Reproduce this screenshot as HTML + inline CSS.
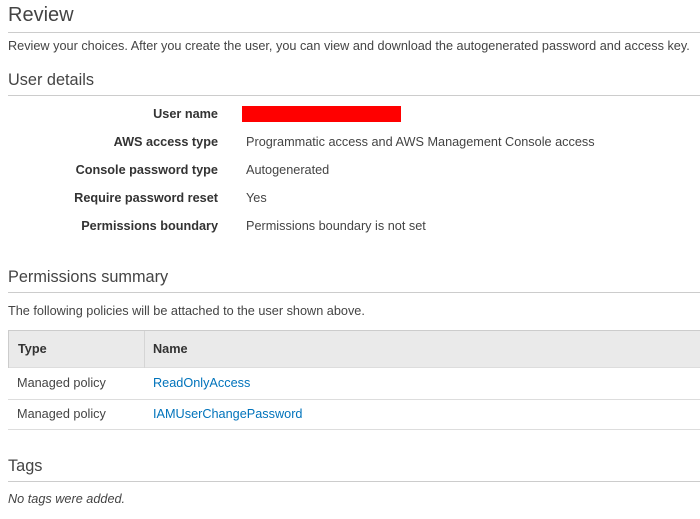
<!DOCTYPE html>
<html><head><style>
body{margin:0;width:700px;height:519px;background:#fff;font-family:"Liberation Sans",Arial,sans-serif;color:#444;position:relative;overflow:hidden}
.a{position:absolute;white-space:nowrap}
.h1{font-size:20px;color:#444}
.h2{font-size:16.3px;color:#444}
.hr{position:absolute;left:8px;right:0;height:1px;background:#ccc}
.t{font-size:12.7px;color:#444}
.lb{font-size:12.7px;font-weight:bold;color:#333;right:482px;text-align:right}
.v{font-size:12.7px;left:246px;color:#444}
.ln{color:#0073bb}
</style></head><body>
<div class="a h1" style="left:8px;top:4px">Review</div>
<div class="hr" style="top:32px"></div>
<div class="a t" style="left:8px;top:39px">Review your choices. After you create the user, you can view and download the autogenerated password and access key.</div>
<div class="a h2" style="left:8px;top:71px">User details</div>
<div class="hr" style="top:95px"></div>
<div class="a lb" style="top:107px">User name</div>
<div class="a" style="left:242px;top:106px;width:159px;height:16px;background:#f00"></div>
<div class="a lb" style="top:135px">AWS access type</div>
<div class="a v" style="top:135px">Programmatic access and AWS Management Console access</div>
<div class="a lb" style="top:163px">Console password type</div>
<div class="a v" style="top:163px">Autogenerated</div>
<div class="a lb" style="top:191px">Require password reset</div>
<div class="a v" style="top:191px">Yes</div>
<div class="a lb" style="top:219px">Permissions boundary</div>
<div class="a v" style="top:219px">Permissions boundary is not set</div>
<div class="a h2" style="left:8px;top:268px">Permissions summary</div>
<div class="hr" style="top:292px"></div>
<div class="a t" style="left:8px;top:304px">The following policies will be attached to the user shown above.</div>
<div class="a" style="left:8px;top:330px;width:692px;height:38px;background:#eaeaea;border-top:1px solid #ccc;box-sizing:border-box;border-bottom:1px solid #ddd"></div>
<div class="a" style="left:144px;top:331px;width:1px;height:37px;background:#d5d5d5"></div>
<div class="a" style="left:8px;top:330px;width:1px;height:38px;background:#ccc"></div>
<div class="a t" style="left:18px;top:342px;font-weight:bold;color:#333">Type</div>
<div class="a t" style="left:153px;top:342px;font-weight:bold;color:#333">Name</div>
<div class="a t" style="left:17px;top:376px">Managed policy</div>
<div class="a t ln" style="left:153px;top:376px">ReadOnlyAccess</div>
<div class="a" style="left:8px;top:399px;width:692px;height:1px;background:#ddd"></div>
<div class="a t" style="left:17px;top:407px">Managed policy</div>
<div class="a t ln" style="left:153px;top:407px">IAMUserChangePassword</div>
<div class="a" style="left:8px;top:429px;width:692px;height:1px;background:#ddd"></div>
<div class="a h2" style="left:8px;top:457px">Tags</div>
<div class="hr" style="top:481px"></div>
<div class="a t" style="left:8px;top:492px;font-style:italic">No tags were added.</div>
</body></html>
